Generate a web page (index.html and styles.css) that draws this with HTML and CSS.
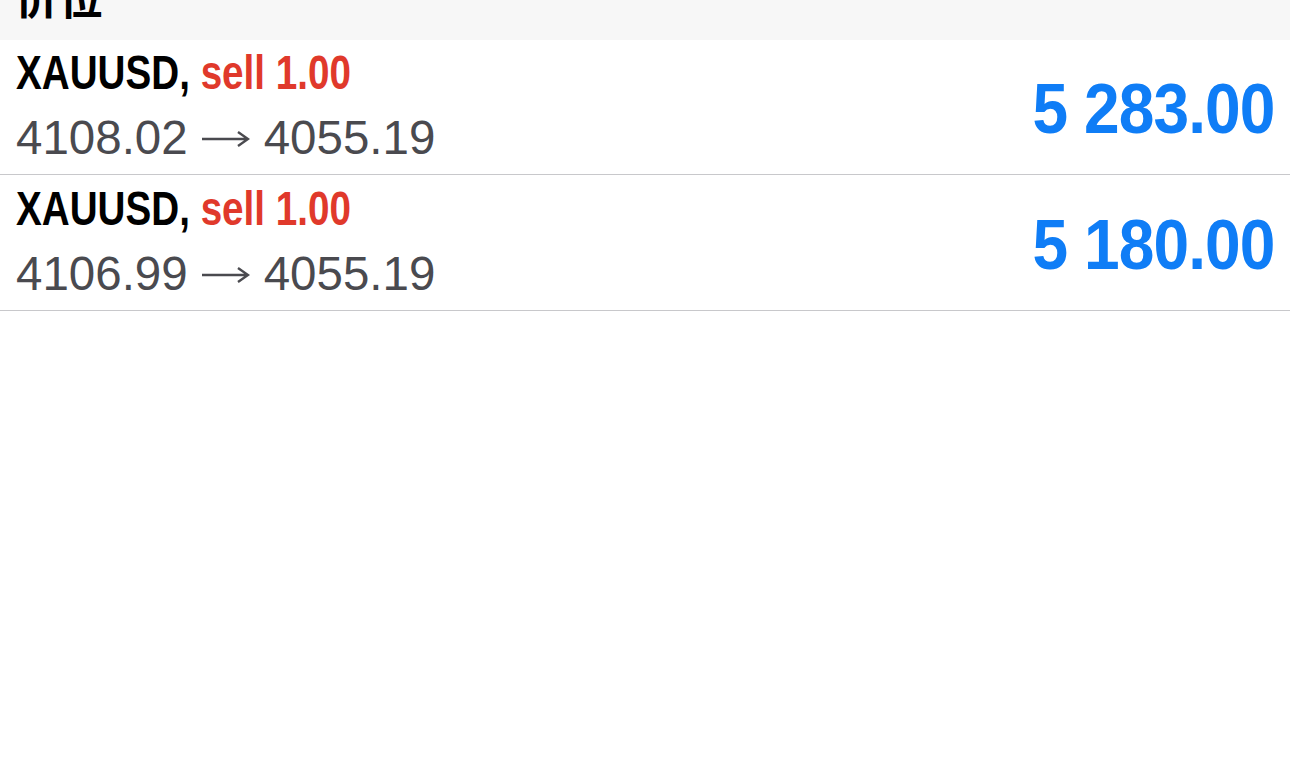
FILE: index.html
```html
<!DOCTYPE html>
<html lang="zh-CN">
<head>
    <meta charset="UTF-8">
    <title>价位</title>
    <link rel="stylesheet" href="styles.css">
</head>
<body>
    <div class="section-header"><span>价位</span></div>

    <div class="order-list">
        <div class="order-row first">
            <div class="order-info">
                <div class="order-title">XAUUSD, <span class="sell">sell 1.00</span></div>
                <div class="order-prices">4108.02<svg class="arrow" viewBox="0 0 48 20"><path d="M0 10H46M36 3L46 10L36 17" fill="none" stroke="currentColor" stroke-width="2.4"/></svg>4055.19</div>
            </div>
            <div class="order-profit">5 283.00</div>
        </div>
        <div class="order-row">
            <div class="order-info">
                <div class="order-title">XAUUSD, <span class="sell">sell 1.00</span></div>
                <div class="order-prices">4106.99<svg class="arrow" viewBox="0 0 48 20"><path d="M0 10H46M36 3L46 10L36 17" fill="none" stroke="currentColor" stroke-width="2.4"/></svg>4055.19</div>
            </div>
            <div class="order-profit">5 180.00</div>
        </div>
    </div>
</body>
</html>
```

FILE: styles.css
```css
:root {
    --header-bg: #f7f7f7;
    --line-color: #c8c8cb;
    --text-color: #000;
    --sub-color: #4a4a4f;
    --sell-color: #e0392b;
    --profit-color: #0f7df6;
}

body {
    margin: 0;
    background-color: #fff;
    font-family: 'Liberation Sans', Arial, 'Noto Sans CJK SC', sans-serif;
    color: var(--text-color);
}

.section-header {
    height: 40px;
    background-color: var(--header-bg);
    overflow: hidden;
}

.section-header span {
    display: block;
    padding-left: 15px;
    margin-top: -34px;
    font-family: 'Noto Sans CJK SC', sans-serif;
    font-size: 44px;
    font-weight: 700;
    line-height: 60px;
}

.order-row {
    display: flex;
    align-items: center;
    justify-content: space-between;
    height: 136px;
    padding: 0 16px;
    border-bottom: 1px solid var(--line-color);
    box-sizing: border-box;
}

.order-row.first {
    height: 135px;
}

.order-info {
    display: flex;
    flex-direction: column;
    align-items: flex-start;
    margin-top: -1px;
}

.order-title {
    font-size: 48px;
    font-weight: 700;
    line-height: 60px;
    white-space: nowrap;
    transform: scaleX(0.805);
    transform-origin: left center;
    width: 420px;
}

.sell {
    color: var(--sell-color);
}

.order-prices {
    display: flex;
    align-items: center;
    margin-top: 3px;
    font-size: 47.5px;
    color: var(--sub-color);
    line-height: 64px;
}

.arrow {
    width: 48px;
    height: 20px;
    margin: 2px 14px 0 14px;
}

.order-profit {
    font-size: 70px;
    font-weight: 700;
    color: var(--profit-color);
    letter-spacing: -1px;
    white-space: nowrap;
    transform: scaleX(0.915);
    transform-origin: right center;
    margin-top: 4px;
}
```
